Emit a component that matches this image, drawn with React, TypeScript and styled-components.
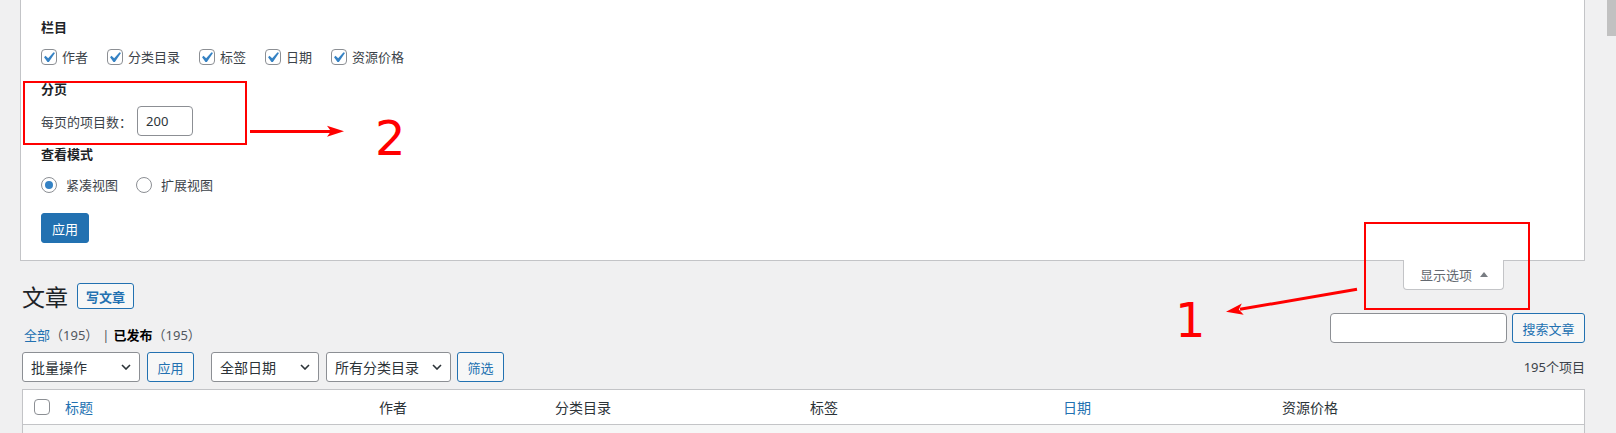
import React from "react";
import styled, { createGlobalStyle } from "styled-components";

const GlobalStyle = createGlobalStyle`
  html, body {
    margin: 0;
    padding: 0;
  }
  body {
    background: #f0f0f1;
    color: #3c434a;
    font-family: "Noto Sans", "Noto Sans CJK SC", sans-serif;
    font-size: 13px;
    overflow: hidden;
  }
`;

const Page = styled.div`
  position: relative;
  width: 1616px;
  height: 433px;
  overflow: hidden;
  box-sizing: border-box;
  padding: 0 31px 0 20px;
`;

/* ---------- screen options panel ---------- */

const ScreenMeta = styled.div`
  background: #fff;
  border: 1px solid #c3c4c7;
  border-top: none;
  padding: 17px 20px 17px;
  display: flex;
  flex-direction: column;
`;

const Legend = styled.div<{ $top?: number }>`
  margin-top: ${({ $top }) => $top ?? 0}px;
  font-weight: 600;
  color: #1d2327;
  line-height: 20px;
  height: 20px;
`;

const OptionRow = styled.div<{ $top: number; $gap?: number }>`
  margin-top: ${({ $top }) => $top}px;
  display: flex;
  align-items: center;
  gap: ${({ $gap }) => $gap ?? 0}px;
  height: 30px;
`;

const Choice = styled.label<{ $space: number }>`
  display: flex;
  align-items: center;
  color: #3c434a;
  line-height: 20px;

  span.text {
    margin-left: ${({ $space }) => $space}px;
  }
`;

const Box = styled.span`
  display: block;
  position: relative;
  flex: none;
  width: 16px;
  height: 16px;
  box-sizing: border-box;
  border: 1px solid #8c8f94;
  border-radius: 4px;
  background: #fff;

  svg {
    position: absolute;
    left: -4px;
    top: -3px;
  }
`;

const Radio = styled.span<{ $checked?: boolean }>`
  flex: none;
  width: 16px;
  height: 16px;
  box-sizing: border-box;
  border: 1px solid #8c8f94;
  border-radius: 50%;
  background: #fff;
  display: flex;
  align-items: center;
  justify-content: center;

  &::before {
    content: "";
    display: ${({ $checked }) => ($checked ? "block" : "none")};
    width: 8px;
    height: 8px;
    border-radius: 50%;
    background: #3582c4;
  }
`;

const FieldLabel = styled.span`
  color: #3c434a;
  margin-right: 5px;
`;

const SmallInput = styled.div`
  width: 56px;
  height: 30px;
  box-sizing: border-box;
  border: 1px solid #8c8f94;
  border-radius: 4px;
  background: #fff;
  padding-left: 8px;
  display: flex;
  align-items: center;
  color: #2c3338;
`;

const Button = styled.div<{
  $primary?: boolean;
  $w?: number;
  $top?: number;
  $right?: number;
}>`
  margin-top: ${({ $top }) => $top ?? 0}px;
  margin-right: ${({ $right }) => $right ?? 0}px;
  width: ${({ $w }) => ($w ? `${$w}px` : "auto")};
  height: 30px;
  box-sizing: border-box;
  padding: 0 ${({ $w }) => ($w ? 0 : 10)}px;
  white-space: nowrap;
  display: inline-flex;
  align-items: center;
  justify-content: center;
  align-self: flex-start;
  flex: none;
  border-radius: 3px;
  border: 1px solid #2271b1;
  background: ${({ $primary }) => ($primary ? "#2271b1" : "#f6f7f7")};
  color: ${({ $primary }) => ($primary ? "#fff" : "#2271b1")};
  font-size: 13px;
`;

/* ---------- title bar with the options tab ---------- */

const TopBar = styled.div`
  margin-top: -1px;
  padding-left: 2px;
  display: flex;
  justify-content: space-between;
  align-items: flex-start;
`;

const Heading = styled.div`
  margin-top: 22px;
  display: flex;
  align-items: flex-start;
`;

const Title = styled.h1`
  margin: 0;
  font-size: 23px;
  font-weight: 400;
  line-height: 30px;
  color: #1d2327;
`;

const AddNew = styled.div`
  margin: 1px 0 0 9px;
  height: 26px;
  box-sizing: border-box;
  padding: 0 8px;
  display: flex;
  align-items: center;
  border: 1px solid #2271b1;
  border-radius: 3px;
  background: #f6f7f7;
  color: #2271b1;
  font-size: 13px;
  font-weight: 600;
`;

const OptionsTab = styled.div`
  margin-right: 81px;
  width: 101px;
  height: 30px;
  box-sizing: border-box;
  padding: 0 15px 0 16px;
  display: flex;
  align-items: center;
  gap: 8px;
  background: #fff;
  border: 1px solid #c3c4c7;
  border-top: none;
  border-radius: 0 0 4px 4px;
  color: #646970;
  font-size: 13px;
  line-height: 28px;
`;

/* ---------- list controls ---------- */

const Wrap = styled.div`
  margin-left: 2px;
`;

const SplitRow = styled.div<{ $top: number }>`
  margin-top: ${({ $top }) => $top}px;
  display: flex;
  justify-content: space-between;
  align-items: flex-start;
  height: 30px;
`;

const Views = styled.div`
  margin: 12px 0 0 2px;
  display: flex;
  align-items: center;
  line-height: 20px;
  font-size: 13px;
`;

const ViewLink = styled.span<{ $current?: boolean }>`
  color: ${({ $current }) => ($current ? "#000" : "#2271b1")};
  font-weight: ${({ $current }) => ($current ? 600 : 400)};
`;

const Count = styled.span`
  color: #50575e;
  font-weight: 400;
`;

const Sep = styled.span`
  color: #50575e;
  margin: 0 4px 0 4px;
`;

const SearchBox = styled.div`
  display: flex;
  gap: 5px;
`;

const SearchInput = styled.div`
  width: 177px;
  height: 30px;
  box-sizing: border-box;
  border: 1px solid #8c8f94;
  border-radius: 4px;
  background: #fff;
`;

const Controls = styled.div`
  display: flex;
  align-items: center;
`;

const Select = styled.div<{ $w: number; $right: number }>`
  width: ${({ $w }) => $w}px;
  margin-right: ${({ $right }) => $right}px;
  height: 30px;
  box-sizing: border-box;
  border: 1px solid #8c8f94;
  border-radius: 3px;
  background: #fff;
  padding: 0 8px 0 8px;
  display: flex;
  align-items: center;
  justify-content: space-between;
  color: #2c3338;
  font-size: 14px;
`;

const ItemCount = styled.div`
  line-height: 30px;
  color: #3c434a;
  font-size: 13px;
`;

/* ---------- table ---------- */

const Table = styled.div`
  margin-top: 7px;
  border: 1px solid #c3c4c7;
  background: #fff;
  box-shadow: 0 1px 1px rgba(0, 0, 0, 0.04);
`;

const HeadRow = styled.div`
  display: grid;
  grid-template-columns: 32px 314px 176px 255px 253px 219px 1fr;
  align-items: center;
  height: 34px;
  border-bottom: 1px solid #c3c4c7;
`;

const Th = styled.div<{ $link?: boolean }>`
  padding-left: 10px;
  font-size: 14px;
  color: ${({ $link }) => ($link ? "#2271b1" : "#2c3338")};
`;

const CheckCell = styled.div`
  padding-left: 11px;
`;

const BodyRow = styled.div`
  height: 40px;
  background: #f6f7f7;
`;

/* ---------- annotations drawn over the screenshot ---------- */

const Overlay = styled.svg`
  position: absolute;
  left: 0;
  top: 0;
  pointer-events: none;
`;

const Marker = styled.span<{ $x: number; $y: number }>`
  position: absolute;
  left: ${({ $x }) => $x}px;
  top: ${({ $y }) => $y}px;
  font-family: "DejaVu Sans", sans-serif;
  font-size: 48px;
  line-height: 1;
  color: #ff0000;
`;

const ScrollThumb = styled.div`
  position: absolute;
  right: 0;
  top: 0;
  width: 9px;
  height: 36px;
  background: #c1c1c1;
`;

const Check = () => (
  <svg viewBox="0 0 20 20" width="21" height="21">
    <path
      d="M14.83 4.89l1.34.94-5.81 8.38H9.02L5.78 9.67l1.34-1.25 2.57 2.4z"
      fill="#3582c4"
    />
  </svg>
);

const Chevron = () => (
  <svg width="10" height="6" viewBox="0 0 10 6">
    <path d="M1 1l4 4 4-4" fill="none" stroke="#2c3338" strokeWidth="1.6" />
  </svg>
);

const columns = ["作者", "分类目录", "标签", "日期", "资源价格"];

export default function App() {
  return (
    <>
      <GlobalStyle />
      <Page>
        <ScreenMeta>
          <Legend>栏目</Legend>
          <OptionRow $top={5} $gap={19}>
            {columns.map((c) => (
              <Choice key={c} $space={5}>
                <Box>
                  <Check />
                </Box>
                <span className="text">{c}</span>
              </Choice>
            ))}
          </OptionRow>

          <Legend $top={7}>分页</Legend>
          <OptionRow $top={7}>
            <FieldLabel>每页的项目数：</FieldLabel>
            <SmallInput>200</SmallInput>
          </OptionRow>

          <Legend $top={8}>查看模式</Legend>
          <OptionRow $top={6} $gap={18}>
            <Choice $space={9}>
              <Radio $checked />
              <span className="text">紧凑视图</span>
            </Choice>
            <Choice $space={9}>
              <Radio />
              <span className="text">扩展视图</span>
            </Choice>
          </OptionRow>

          <Button $primary $top={13}>
            应用
          </Button>
        </ScreenMeta>

        <TopBar>
          <Heading>
            <Title>文章</Title>
            <AddNew>写文章</AddNew>
          </Heading>
          <OptionsTab>
            <span>显示选项</span>
            <svg width="8" height="5" viewBox="0 0 8 5">
              <polygon points="0,5 4,0 8,5" fill="#787c82" />
            </svg>
          </OptionsTab>
        </TopBar>

        <Wrap>
          <SplitRow $top={1}>
            <Views>
              <ViewLink>全部</ViewLink>
              <Count>（195）</Count>
              <Sep>|</Sep>
              <ViewLink $current>已发布</ViewLink>
              <Count>（195）</Count>
            </Views>
            <SearchBox>
              <SearchInput />
              <Button $w={73}>搜索文章</Button>
            </SearchBox>
          </SplitRow>

          <SplitRow $top={9}>
            <Controls>
              <Select $w={118} $right={7}>
                批量操作
                <Chevron />
              </Select>
              <Button $w={47} $right={17}>
                应用
              </Button>
              <Select $w={108} $right={7}>
                全部日期
                <Chevron />
              </Select>
              <Select $w={125} $right={6}>
                所有分类目录
                <Chevron />
              </Select>
              <Button $w={47}>筛选</Button>
            </Controls>
            <ItemCount>195个项目</ItemCount>
          </SplitRow>

          <Table>
            <HeadRow>
              <CheckCell>
                <Box />
              </CheckCell>
              <Th $link>标题</Th>
              <Th>作者</Th>
              <Th>分类目录</Th>
              <Th>标签</Th>
              <Th $link>日期</Th>
              <Th>资源价格</Th>
            </HeadRow>
            <BodyRow />
          </Table>
        </Wrap>

        <ScrollThumb />

        <Overlay width="1616" height="433" viewBox="0 0 1616 433">
          <g fill="none" stroke="#ff0000" strokeWidth="2">
            <rect x="24" y="82" width="222" height="62" />
            <rect x="1365" y="223" width="164" height="86" />
          </g>
          <line x1="250" y1="131.5" x2="333" y2="131.5" stroke="#ff0000" strokeWidth="3" />
          <polygon points="344,131.3 327,125.7 331,131.3 327,136.8" fill="#ff0000" />
          <line x1="1357" y1="289.3" x2="1240" y2="309.3" stroke="#ff0000" strokeWidth="3" />
          <polygon points="1226,311.7 1241.8,303.4 1238.8,309.5 1243.7,314.8" fill="#ff0000" />
        </Overlay>
        <Marker $x={375} $y={114}>2</Marker>
        <Marker $x={1175} $y={296}>1</Marker>
      </Page>
    </>
  );
}
